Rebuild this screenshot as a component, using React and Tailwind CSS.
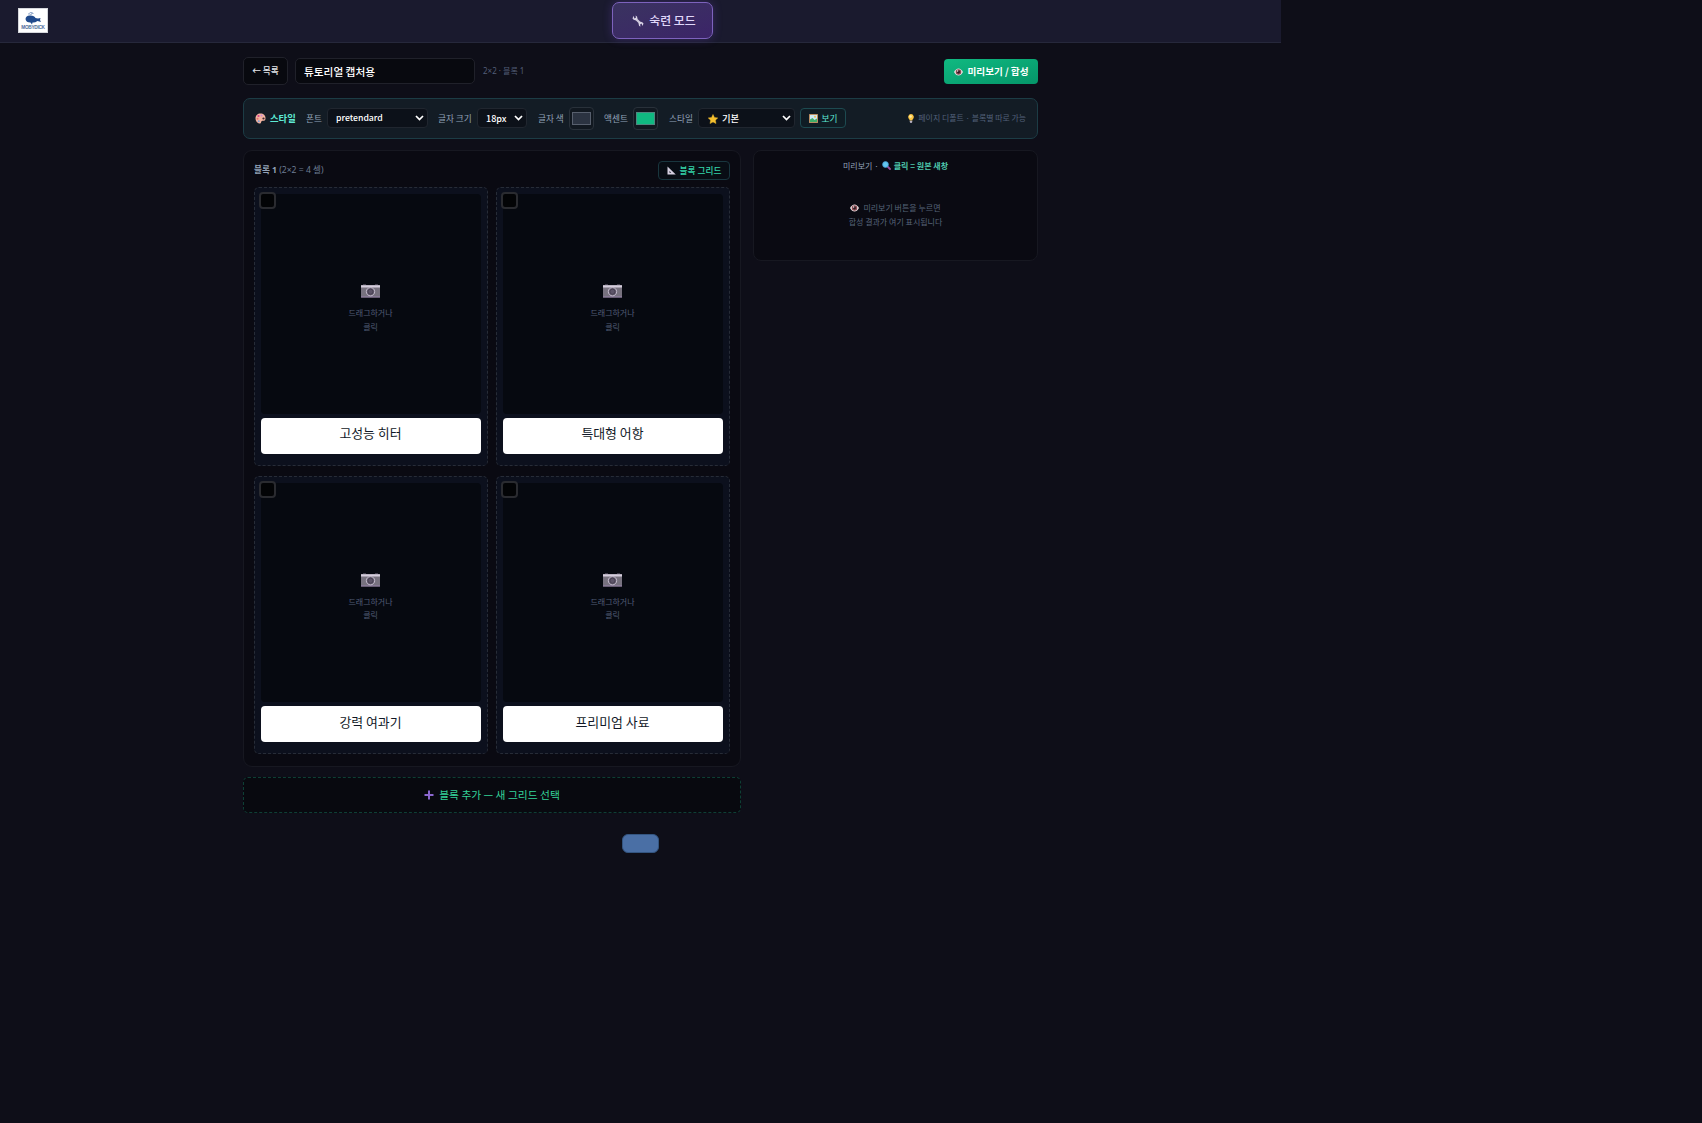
import React from "react";

const Wrench = () => (
  <svg className="h-[12px] w-[12px]" viewBox="0 0 24 24">
    <path d="M7 7 L17.5 17.5" stroke="#cfc8dc" strokeWidth="4.500" />
    <path d="M3 1.500 L1 7 Q4 12 9 10 L11 7 Q11 2 7 1 L8 5 L5 7Z M21 22 L23 17 Q20 12 15 14 L13 17 Q13 22 17 23 L16 19 L19 17Z" fill="#d8d2e4" />
  </svg>
);

const Palette = () => (
  <svg className="h-[11px] w-[11px]" viewBox="0 0 22 22">
    <path d="M11 1 C5 1 1 5 1 11 C1 17 6 21 10 21 C13 21 11 17 14 16 C17 15 21 17 21 10 C21 5 17 1 11 1Z" fill="#f2b3a0" />
    <circle cx="7" cy="6" r="2.200" fill="#d6408b" />
    <circle cx="13" cy="5" r="2" fill="#c98bd8" />
    <circle cx="5" cy="11.500" r="2" fill="#e2706b" />
    <circle cx="7.500" cy="16.500" r="2" fill="#7d9fd8" />
    <circle cx="17" cy="11" r="2.200" fill="#3b2530" />
  </svg>
);

const Eye = () => (
  <svg className="h-[8px] w-[9px]" viewBox="0 0 18 16">
    <path d="M0 8 Q4 1 9 1 Q14 1 18 8 Q14 15 9 15 Q4 15 0 8Z" fill="#efe3e6" />
    <circle cx="9" cy="8" r="5.500" fill="#8a4a50" />
    <circle cx="9" cy="8" r="2.800" fill="#2c1a22" />
    <circle cx="7.300" cy="6" r="1.300" fill="#fff" />
  </svg>
);

const Star = () => (
  <svg className="h-[10px] w-[10px]" viewBox="0 0 24 24">
    <path d="M12 1 L15.500 8.300 L23.500 9.300 L17.700 14.800 L19.200 23 L12 19 L4.800 23 L6.300 14.800 L.5 9.300 L8.500 8.300Z" fill="#f5c02e" stroke="#f5c02e" strokeWidth="1" />
  </svg>
);

const Picture = () => (
  <svg className="h-[9px] w-[9px]" viewBox="0 0 18 18">
    <rect width="18" height="18" rx="1" fill="#b98d62" />
    <rect x="2" y="2" width="14" height="14" fill="#cde9f5" />
    <path d="M2 11 L7 8 L11 12 L16 9 V16 H2Z" fill="#3fae6a" />
    <circle cx="12" cy="5.500" r="1.800" fill="#f3bd3c" />
  </svg>
);

const Bulb = () => (
  <svg className="h-[9px] w-[6px]" viewBox="0 0 12 18">
    <path d="M6 0 A6 6 0 0 0 2.500 10.500 L3.500 13 H8.500 L9.500 10.500 A6 6 0 0 0 6 0Z" fill="#fcc543" />
    <circle cx="5" cy="5" r="2.500" fill="#fff0a8" />
    <path d="M3.500 13.500 H8.500 V16 L7 18 H5 L3.500 16Z" fill="#b9b2c3" />
  </svg>
);

const SetSquare = () => (
  <svg className="h-[9px] w-[9px]" viewBox="0 0 18 18">
    <path fillRule="evenodd" d="M1 1 L17.500 17 H1Z M5 10 V13.500 H8.500Z" fill="#d5cfe0" />
  </svg>
);

const Magnifier = () => (
  <svg className="h-[9px] w-[9px]" viewBox="0 0 18 18">
    <path d="M11 11 L16 16" stroke="#9a4f9c" strokeWidth="3.600" strokeLinecap="round" />
    <circle cx="7" cy="7" r="5.800" fill="#62c6ee" stroke="#4596cf" strokeWidth="1.500" />
  </svg>
);

const Camera = () => (
  <svg className="h-[14px] w-[19px]" viewBox="0 0 19 14">
    <path d="M2 .5 H5 V2 H2Z M14 .5 H17 V2 H14Z" fill="#756d80" />
    <rect y="1" width="19" height="12.500" rx=".5" fill="#77727f" />
    <rect y="1.300" width="19" height="2.200" fill="#d5cddd" />
    <rect y="12.300" width="19" height="1.200" fill="#8d7d9e" />
    <circle cx="9.500" cy="7.700" r="4.200" fill="#6d6578" stroke="#c2bacb" strokeWidth="1" />
    <circle cx="9.500" cy="7.700" r="2.600" fill="#5c5468" stroke="#463f50" strokeWidth="1" />
  </svg>
);

const Whale = () => (
  <svg className="h-[13px] w-[16px]" viewBox="0 0 32 26">
    <path d="M1 14 Q2 6 11 7 Q19 7 21 12 L26 13 L31 12 L30 16 L32 20 L25 18 Q19 22 15 21 L14 25 L11 21 Q2 21 1 14Z" fill="#204a8c" />
    <path d="M11 6 Q10 2 6 4 M12 6 Q12 1 17 3 M9 2 Q12 0 15 1" stroke="#6f8cba" strokeWidth="1.500" fill="none" />
  </svg>
);

const Chevron = () => (
  <svg className="h-[6px] w-[9px] shrink-0" viewBox="0 0 9 6">
    <path d="M1 1 L4.500 4.600 L8 1" fill="none" stroke="#fff" strokeWidth="1.700" />
  </svg>
);

function Select({ className, children }) {
  return (
    <div className={`flex h-[20px] items-center justify-between rounded-[4px] border border-[#20262f] bg-[#0c1119] pl-[8px] pr-[3px] font-medium text-white ${className}`}>
      <span className="flex items-center gap-[4px] pt-[1px]">{children}</span>
      <Chevron />
    </div>
  );
}

function Swatch({ color }) {
  return (
    <div className="flex h-[23px] w-[25px] items-center justify-center rounded-[4px] border border-[#29313a] bg-[#111820]">
      <div className={`h-[13px] w-[19px] border border-[#6b7280]/70 ${color}`} />
    </div>
  );
}

function Cell({ label }) {
  return (
    <div className="relative flex h-[278.67px] flex-col rounded-[5px] border border-dashed border-[#272c37] bg-[#0c101d] px-[6px] pt-[6px]">
      <div className="flex h-[219.67px] flex-col items-center rounded-[4px] bg-[#060910] pr-[1px] pt-[90px]">
        <Camera />
        <div className="mt-[8px] text-center text-[8px] leading-[13.7px] text-[#525d77]">
          드래그하거나
          <br />
          클릭
        </div>
      </div>
      <div className="mt-[4px] flex h-[36px] justify-center rounded-[4px] bg-white pr-[1px] pt-[5.500px] text-[12.9px] leading-[20px] text-[#111827]">
        {label}
      </div>
      <div className="absolute left-[4px] top-[4px] h-[17px] w-[17px] rounded-[4px] border-2 border-[#2a2b30] bg-[#030406]" />
    </div>
  );
}

export default function App() {
  return (
    <div className="h-[1123px] w-full overflow-hidden bg-[#0e0e18] font-['Noto_Sans_CJK_KR','Noto_Sans',sans-serif] leading-none">
      <header className="flex h-[42.500px] w-[1281px] items-start border-b border-[#26283b] bg-[#1a1a2e]">
        <div className="ml-[18px] mt-[8px] flex h-[25px] w-[30px] flex-col items-center border border-[#d5d7dc] bg-white pt-[3px]">
          <Whale />
          <span className="font-['Liberation_Sans',sans-serif] text-[4.700px] font-bold leading-[5px] tracking-[-0.25px] text-[#4d6a9c]">MOBYDICK</span>
        </div>
        <div className="ml-[564px] mt-[2px] flex h-[37px] w-[101px] items-center justify-center gap-[5px] rounded-[7px] border border-[#7d62bd] bg-linear-to-br from-[#3a3360] to-[#3c2468] pl-[3px] text-[11.9px] font-medium text-[#e0d8fa] shadow-[0_0_10px_rgba(139,92,246,0.25)]">
          <Wrench />
          <span className="-mt-px">숙련 모드</span>
        </div>
      </header>

      <main className="ml-[243px] w-[795px]">
        <div className="mt-[14.500px] flex h-[28px] items-center">
          <div className="flex h-[28px] w-[45px] items-center justify-center rounded-[5px] border border-[#20212a] bg-[#08090f] pb-[1px] text-[8.67px] font-medium text-[#e5e7eb]">← 목록</div>
          <div className="ml-[7px] flex h-[26px] w-[180px] items-center rounded-[5px] border border-[#20212a] bg-[#08090f] pl-[8px] pt-[2px] text-[10.67px] font-medium text-white">튜토리얼 캡처용</div>
          <span className="ml-[8px] pb-[1px] font-['Noto_Sans','Noto_Sans_CJK_KR',sans-serif] text-[8px] text-[#525d77]">2×2 · 블록 1</span>
          <div className="ml-auto mt-[1px] flex h-[25px] w-[94px] items-center justify-center gap-[4px] rounded-[4px] bg-linear-to-br from-[#10b981] to-[#059669] pl-[1px] text-[9.6px] font-bold text-white">
            <Eye />
            <span>미리보기 / 합성</span>
          </div>
        </div>

        <div className="mt-[12.500px] flex h-[41.500px] items-center rounded-[7px] border border-[#1c3c45] bg-[#131c25] pl-[11px] pr-[11px] text-[8.67px] text-[#94a3b8]">
          <Palette />
          <span className="ml-[4px] w-[26px] whitespace-nowrap text-[9.33px] font-bold text-[#5eead4]">스타일</span>
          <span className="ml-[10px] w-[21px] whitespace-nowrap">폰트</span>
          <Select className="w-[101px] text-[8.700px]">pretendard</Select>
          <span className="ml-[10px] w-[39px] whitespace-nowrap">글자 크기</span>
          <Select className="w-[50px] text-[9px]">18px</Select>
          <span className="ml-[11px] w-[31px] whitespace-nowrap">글자 색</span>
          <Swatch color="bg-[#2b3341]" />
          <span className="ml-[10px] w-[29px] whitespace-nowrap">액센트</span>
          <Swatch color="bg-[#10b981]" />
          <span className="ml-[11px] w-[29px] whitespace-nowrap">스타일</span>
          <Select className="w-[97px] pl-[9px] text-[9.33px]">
            <Star />
            기본
          </Select>
          <div className="ml-[5px] flex h-[20px] w-[46px] items-center justify-center gap-[4px] rounded-[4px] border border-[#1d4a50] bg-[#0f1c24] pt-[1px] text-[#5eead4]">
            <Picture />
            보기
          </div>
          <div className="ml-auto flex items-center gap-[4px] text-[7.900px] text-[#526079]">
            <Bulb />
            페이지 디폴트 · 블록별 따로 가능
          </div>
        </div>

        <div className="mt-[11px] flex items-start gap-[12px]">
          <div className="w-[498px]">
            <section className="h-[616.500px] rounded-[9px] border border-[#171821] bg-[#0a0a12] px-[10px] pt-[10px]">
              <div className="flex h-[19px] items-center justify-between">
                <div className="pb-[1px] font-['Noto_Sans','Noto_Sans_CJK_KR',sans-serif] text-[8.600px] text-[#6d7d94]">
                  <b className="text-[#94a3b8]">블록 1</b> (2×2 = 4 셀)
                </div>
                <div className="flex h-[19px] w-[72px] items-center justify-center gap-[4px] rounded-[4px] border border-[#19363e] bg-[#080d14] pb-[1px] text-[8.67px] font-medium text-[#34d3a8]">
                  <SetSquare />
                  블록 그리드
                </div>
              </div>
              <div className="mt-[7px] grid grid-cols-2 gap-x-[8px] gap-y-[10px]">
                <Cell label="고성능 히터" />
                <Cell label="특대형 어항" />
                <Cell label="강력 여과기" />
                <Cell label="프리미엄 사료" />
              </div>
            </section>
            <div className="mt-[10px] flex h-[36px] items-center justify-center gap-[5px] rounded-[5px] border border-dashed border-[#0e3f35] bg-[#08090f] pt-[1px] text-[10.75px] text-[#34d399]">
              <svg className="h-[10px] w-[10px]" viewBox="0 0 10 10">
                <path d="M5 .5 V9.500 M.5 5 H9.500" stroke="#8b67cf" strokeWidth="2" />
              </svg>
              블록 추가 — 새 그리드 선택
            </div>
          </div>

          <aside className="flex h-[111px] w-[285px] flex-col items-center rounded-[8px] border border-[#171821] bg-[#0a0a12] pt-[10px]">
            <div className="flex items-center gap-[3px] text-[8px] leading-[9px] text-[#94a3b8]">
              미리보기 ·
              <Magnifier />
              <b className="text-[#4fc9ad]">클릭 = 원본 새창</b>
            </div>
            <div className="mt-[31px] text-center text-[8px] leading-[14px] text-[#566479]">
              <div className="flex items-center justify-center gap-[4px]">
                <Eye />
                미리보기 버튼을 누르면
              </div>
              합성 결과가 여기 표시됩니다
            </div>
          </aside>
        </div>
      </main>
      <div className="ml-[622px] mt-[21px] h-[19px] w-[37px] rounded-[6px] border border-[#345580] bg-[#4a6fa5]" />
    </div>
  );
}
